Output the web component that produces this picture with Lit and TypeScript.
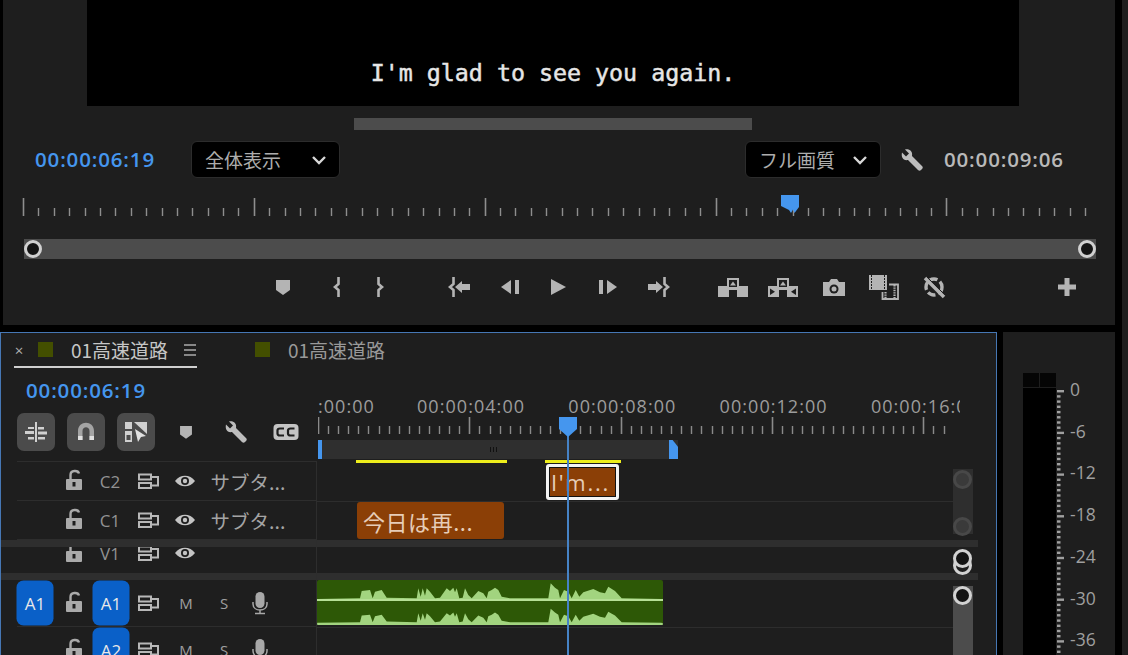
import { LitElement, html, css, svg } from "lit";
import { customElement } from "lit/decorators.js";

const G = "#b4b4b4";
const BG = "#1e1e1e";

const range = (n: number) => Array.from({ length: n }, (_, i) => i);

const wave1: [number, number][] = [[22,192],[150,190],[155,168],[180,165],[188,190],[195,170],[215,165],[230,188],[320,190],[325,160],[332,185],[338,160],[345,182],[350,160],[360,170],[375,190],[390,188],[410,160],[420,168],[430,158],[435,172],[440,160],[448,190],[458,188],[465,160],[475,180],[485,190],[505,168],[520,175],[530,190],[535,170],[545,165],[555,158],[565,165],[575,185],[600,190],[715,190],[722,145],[735,158],[745,165],[750,190],[762,165],[775,170],[785,190],[797,165],[808,185],[820,172],[850,162],[870,172],[885,175],[895,155],[915,168],[935,190],[1055,192]];

function wavePath(dy: number, shrink: number) {
  const base = 195;
  const pts = wave1.map(([x, y]) => `${(x / 3).toFixed(1)},${((base - (base - y) * shrink + dy) / 3).toFixed(1)}`);
  return `M7.3,${((base + dy) / 3).toFixed(1)} L${pts.join(" L")} L351.7,${((base + dy) / 3).toFixed(1)} Z`;
}

const braceL = (x: number) => svg`<path d="M${x + 2.5},-10V-3L${x - 1},0L${x + 2.5},3V10" fill="none" stroke="${G}" stroke-width="2.6"/>`;
const braceR = (x: number) => svg`<path d="M${x - 2.5},-10V-3L${x + 1},0L${x - 2.5},3V10" fill="none" stroke="${G}" stroke-width="2.6"/>`;
const topBox = svg`<path d="M-15,-1H-6V-9H6V-1H15V10H4V3H-4V10H-15Z" fill="${G}"/><rect x="-4" y="-7" width="8" height="7" fill="${BG}"/><path d="M-3,-1.5L0,-5.5L3,-1.5Z" fill="${G}"/>`;

const icons = {
  marker: svg`<path d="M-7,-7H7V3L0,8L-7,3Z" fill="${G}"/>`,
  inB: braceL(0),
  outB: braceR(0),
  goIn: svg`${braceL(-9)}<path d="M-5,0L2,-6V-3H10V3H2V6Z" fill="${G}"/>`,
  stepB: svg`<path d="M1,-7V7L-9,0Z" fill="${G}"/><rect x="5" y="-7" width="4" height="14" fill="${G}"/>`,
  play: svg`<path d="M-7,-8V8L8,0Z" fill="${G}"/>`,
  stepF: svg`<rect x="-9" y="-7" width="4" height="14" fill="${G}"/><path d="M-1,-7V7L9,0Z" fill="${G}"/>`,
  goOut: svg`${braceR(9)}<path d="M5,0L-2,-6V-3H-10V3H-2V6Z" fill="${G}"/>`,
  lift: topBox,
  extract: svg`${topBox}<path d="M-13,1.5V8L-8,4.7Z" fill="${BG}"/><path d="M13,1.5V8L8,4.7Z" fill="${BG}"/>`,
  camera: svg`<path d="M-11,-5H-5L-3,-8H3L5,-5H11V9H-11Z" fill="${G}"/><circle cy="2" r="4.5" fill="${BG}"/><circle cy="2" r="2.5" fill="${G}"/>`,
  compare: svg`<rect x="-14" y="-12" width="18" height="15" fill="${G}"/><path d="M-11.5,-12V3M1.5,-12V3" stroke="${BG}" stroke-width="1" stroke-dasharray="2 1"/><path d="M6,-2.5H15V12H-.5V5" fill="none" stroke="${G}" stroke-width="1.8"/><path d="M2.5,5V11M11.5,-2V11" stroke="${G}" stroke-width="2.2" stroke-dasharray="1.4 1"/>`,
  proxy: svg`<circle r="8" fill="none" stroke="${G}" stroke-width="3.4" stroke-dasharray="8 3"/><path d="M-9,-9L10,10" stroke="${G}" stroke-width="3.5"/><path d="M-7,-10L11,8" stroke="${BG}" stroke-width="1"/>`,
  plus: svg`<path d="M-2.5,-9H2.5V-2.5H9V2.5H2.5V9H-2.5V2.5H-9V-2.5H-2.5Z" fill="${G}"/>`,
  wrench: svg`<path d="M-10,-7.5L-6,-3.5L-3,-6.5L-7,-10.5C-3,-11.5 1,-9 0,-4L10,6C11,7 11,8 10,9L9,10C8,11 7,11 6,10L-4,0C-9,1 -11,-3 -10,-7.5Z" fill="#bdbdbd"/>`,
  menu: svg`<path d="M-6,-5H6M-6,0H6M-6,5H6" stroke="#aaa" stroke-width="1.3"/>`,
  nest: svg`<path d="M-1,-10H1V10H-1Z" fill="#d0d0d0"/><path d="M-11,-1H-2V2H-11ZM2,-5H8V-2.5H2ZM2,-.5H11V2.5H2ZM-8,-5H-2V-3H-8ZM-8,5H-2V7.5H-8ZM2,5H9V7.5H2Z" fill="#d0d0d0"/>`,
  magnet: svg`<path d="M-8,8V-1C-8,-12 8,-12 8,-1V8H3.5V-1C3.5,-6 -3.5,-6 -3.5,-1V8Z" fill="#a4a4a4"/><rect x="-8" y="4" width="4.5" height="4" fill="#e0e0e0"/><rect x="3.5" y="4" width="4.5" height="4" fill="#e0e0e0"/>`,
  linked: svg`<path d="M-11,-10H-4V-3H-11ZM-11,-1H-4V10H-11Z" fill="#d0d0d0"/><path d="M-9.5,3H-5.5V8H-9.5Z" fill="#4b4b4b"/><path d="M-2,-10H11V2Z" fill="#d0d0d0"/><path d="M-2,-6L11,3L4,4L1,11Z" fill="#4b4b4b"/><path d="M-1,-3L10,4L5,5L2,10Z" fill="#e0e0e0"/>`,
  cc: svg`<rect x="-12.5" y="-8" width="25" height="16" rx="4" fill="#c4c4c4"/><path d="M-2,-3.5H-6Q-8.5,-3.5 -8.5,-1.5V1.5Q-8.5,3.5 -6,3.5H-2M8.5,-3.5H4.5Q2,-3.5 2,-1.5V1.5Q2,3.5 4.5,3.5H8.5" fill="none" stroke="${BG}" stroke-width="2.2"/>`,
  lock: svg`<path d="M-3.5,-2V-6C-3.5,-11 4,-11 5,-7.5" fill="none" stroke="#aaa" stroke-width="2.4"/><rect x="-8" y="-2" width="16" height="11" rx="1" fill="#aaa"/><rect x="-1.5" y="1" width="3" height="4.5" fill="${BG}"/>`,
  sync: svg`<rect x="-9" y="-6.5" width="12" height="5" fill="none" stroke="#b8b8b8" stroke-width="2"/><rect x="-9" y="2" width="12" height="5" fill="none" stroke="#b8b8b8" stroke-width="2"/><path d="M3,-4H10V4.5H3" fill="none" stroke="#b8b8b8" stroke-width="2"/>`,
  eye: svg`<path d="M-10,0C-5,-7 5,-7 10,0C5,7 -5,7 -10,0Z" fill="#c4c4c4"/><circle r="4" fill="${BG}"/><circle r="2.2" fill="#c4c4c4"/>`,
  mic: svg`<rect x="-4.5" y="-11" width="9" height="16" rx="4.5" fill="#a8a8a8"/><path d="M-7,-1V1C-7,9 7,9 7,1V-1M0,7V10M-5,10.5H5" fill="none" stroke="#a8a8a8" stroke-width="1.5"/>`,
  chevron: svg`<path d="M-6,-3L0,3L6,-3" fill="none" stroke="#d8d8d8" stroke-width="2.4"/>`,
};

function ic(body: unknown, w = 28, h = 28) {
  return html`<svg class="ic" width="${w}" height="${h}" viewBox="${-w / 2} ${-h / 2} ${w} ${h}">${body}</svg>`;
}

@customElement("app-root")
export class AppRoot extends LitElement {
  static styles = css`
    :host {
      display: block; width: 1128px; height: 655px; overflow: hidden; background: #000; position: relative;
      font-family: "Open Sans", "Noto Sans CJK JP", sans-serif; color: #b4b4b4;
    }
    svg { display: block; }
    .jp { font-family: "Noto Sans CJK JP", sans-serif; }
    .strip { position: absolute; top: 0; right: 0; width: 6px; height: 655px; background: #1e1e1e; }
    .monitor { margin-left: 3px; width: 1112px; height: 325px; background: #1e1e1e; display: flex; flex-direction: column; }
    .video { margin-left: 84px; width: 932px; height: 106px; background: #000; display: flex; justify-content: center; flex: none; }
    .subtitle { margin-top: 58px; font: 400 23.3px/30px "DejaVu Sans Mono", monospace; color: #e6e6e6; height: 30px; -webkit-text-stroke: .45px #e6e6e6; }
    .hscroll { margin: 12px 0 0 351px; width: 398px; height: 12px; background: #4c4c4c; flex: none; }
    .ctl { margin-top: 11px; height: 37px; display: flex; align-items: center; flex: none; }
    .ctl .tc { margin-bottom: 2px; }
    .tc { font-size: 20.5px; font-weight: 600; letter-spacing: .85px; white-space: nowrap; }
    .tc.blue { color: #4596ee; }
    .tc.gray { color: #b9b9b9; }
    .tc.first { margin-left: 32px; }
    .drop {
      height: 37px; box-sizing: border-box; background: #000; border: 1px solid #2c2c2c; border-radius: 6px;
      display: flex; align-items: center; justify-content: space-between; font-size: 19px; color: #adadad;
    }
    .drop svg { flex: none; }
    .d1 { margin-left: 36px; width: 149px; padding: 0 11px 0 13px; }
    .d2 { margin-left: 405px; width: 136px; padding: 0 11px 0 13px; }
    .wr { margin-left: 19px; margin-right: 20px; }
    .ruler1 { margin: 19px 0 0 20px; height: 22px; flex: none; }
    .ruler1 svg { overflow: visible; }
    .slider { margin: 20px 0 0 21px; width: 1072px; height: 20px; background: #4c4c4c; position: relative; flex: none; }
    .knob { position: absolute; width: 18px; height: 18px; box-sizing: border-box; border: 3px solid #d0d0d0; border-radius: 50%; background: #141414; top: 1px; }
    .knob.l { left: 0; }
    .knob.r { right: 0; }
    .transport { margin-top: 14px; height: 28px; position: relative; flex: none; }
    .transport .ic { position: absolute; top: 0; }

    .lower { display: flex; margin-top: 7px; height: 323px; }
    .tl {
      width: 997px; height: 323px; box-sizing: border-box; background: #1e1e1e; border: 1px solid #4677b4; border-bottom: 0;
      position: relative; overflow: hidden; flex: none;
    }
    .meter { margin-left: 6px; width: 112px; background: #1e1e1e; position: relative; flex: none; }
    .tabs { display: flex; align-items: center; height: 33px; margin-left: 13px; width: 183px; border-bottom: 2px solid #cfcfcf; position: relative; }
    .x { font-size: 15px; width: 10px; text-align: center; margin-right: 14px; margin-left: 0; color: #b0b0b0; flex: none; }
    .sw { width: 15px; height: 15px; background: #434f00; flex: none; }
    .tab { font-size: 19px; margin-left: 18px; white-space: nowrap; color: #c6c6c6; flex: none; }
    .tabs .menu { margin-left: 14px; flex: none; }
    .tab2 { position: absolute; left: 241px; top: 0; height: 33px; display: flex; align-items: center; }
    .tab2 .tab { color: #999; }
    .tc2 { margin: 10px 0 0 25px; line-height: 24px; height: 24px; }
    .tools { margin: 11px 0 10px 16px; display: flex; align-items: center; height: 38px; }
    .tb { width: 38px; height: 38px; border-radius: 7px; background: #4b4b4b; display: flex; align-items: center; justify-content: center; margin-right: 12px; flex: none; }
    .pl { flex: none; }
    .pl.p1 { margin-left: 9px; }
    .pl.p2 { margin-left: 27px; }
    .pl.p3 { margin-left: 23px; }
    .tracks { width: 316px; }
    .row { position: relative; box-sizing: border-box; border-bottom: 1px solid #2d2d2d; margin-left: 16px; }
    .row .cell { position: absolute; top: 50%; transform: translate(-50%, -50%); white-space: nowrap; }
    .row.c { height: 39px; }
    .row.v { height: 26px; border-bottom: 0; overflow: hidden; margin-bottom: 7px; }
    .row.v .cell { top: calc(50% - 7px); }
    .row.c2 { margin-bottom: 7px; }
    .row.a { height: 47px; }
    .lbl { font-size: 17px; color: #929292; }
    .sub { font-size: 19.5px; color: #a4a4a4; }
    .ms { font-size: 15px; color: #a0a0a0; }
    .blueb { width: 37px; height: 45px; border-radius: 7px; background: #0a60c8; color: #e8e8e8; font-size: 17px; display: flex; align-items: center; justify-content: center; }
    .topl { height: 1px; background: #2d2d2d; margin-left: 16px; }

    .canvas { position: absolute; left: 0; top: 0; width: 996px; height: 323px; pointer-events: none; }
    .band { height: 7px; background: #2e2e2e; position: absolute; left: 0; width: 977px; }
    .band.b1 { top: 207px; }
    .band.b2 { top: 240px; }
    .rclip { position: absolute; left: 317px; top: 61px; width: 642px; height: 24px; overflow: hidden; }
    .rclip span { position: absolute; top: 0; font-size: 18px; color: #9c9c9c; letter-spacing: 1.05px; white-space: nowrap; line-height: 24px; }
    .rticks { position: absolute; left: 317px; top: 84px; }
    .zoombar { position: absolute; left: 317px; top: 107px; width: 360px; height: 19px; background: #2f2f2f; }
    .zl { position: absolute; left: 0; top: 0; width: 4px; height: 19px; background: #4596ee; }
    .zr { position: absolute; left: 351px; top: 0; width: 9px; height: 19px; background: #4596ee; clip-path: polygon(0 0, 40% 0, 100% 35%, 100% 100%, 0 100%); }
    .grip { position: absolute; left: 172px; top: 7px; width: 7px; height: 5px; background: repeating-linear-gradient(90deg, #111 0 1.4px, transparent 1.4px 2.8px); }
    .vline { position: absolute; left: 315px; top: 128px; width: 1px; height: 195px; background: #2d2d2d; }
    .hl { position: absolute; left: 316px; width: 637px; height: 1px; background: #2d2d2d; }
    .hl.h1 { top: 168px; }
    .hl.h2 { top: 294px; }
    .yel { position: absolute; height: 3px; background: #eeee1c; top: 127px; }
    .yel.y1 { left: 355px; width: 151px; }
    .yel.y2 { left: 544px; width: 76px; }
    .clip { position: absolute; box-sizing: border-box; background: #8b3f06; color: #e6cdb8; font-size: 22px; border-radius: 3px; white-space: nowrap; overflow: hidden; display: flex; align-items: center; }
    .clip.sel { left: 545px; top: 131px; width: 73px; height: 36px; border: 3px solid #f4f4f4; box-shadow: inset 0 0 0 1px #111; padding-left: 2px; letter-spacing: 1.7px; }
    .clip.c1 { left: 356px; top: 169px; width: 147px; height: 37px; padding-left: 6px; letter-spacing: .55px; }
    .audio { position: absolute; left: 316px; top: 247px; }
    .pline { position: absolute; left: 566px; top: 100px; width: 2px; height: 223px; background: #4683c6; }
    .phead { position: absolute; left: 558px; top: 84px; width: 18px; height: 20px; background: #4596ee; clip-path: polygon(0 0, 100% 0, 100% 60%, 50% 100%, 0 60%); }
    .vs { position: absolute; left: 952px; width: 20px; background: #2e2e2e; }
    .vs.off { top: 136px; height: 65px; }
    .vs.on { background: #4c4c4c; top: 253px; height: 70px; }
    .dk, .wk { position: absolute; left: 952px; width: 19px; height: 19px; box-sizing: border-box; border-radius: 50%; }
    .dk { border: 3px solid #484848; background: #3a3a3a; }
    .dk.a { top: 137px; }
    .dk.b { top: 184px; }
    .wk { border: 3px solid #d2d2d2; background: #141414; }
    .wk.s1 { top: 223px; background: transparent; }
    .wk.s2 { top: 216px; }
    .wk.s3 { top: 253px; }

    .black { position: absolute; left: 20px; top: 41px; width: 33px; height: 282px; background: #000; }
    .hdr { position: absolute; left: 0; top: 0; width: 33px; height: 15px; box-sizing: border-box; display: flex; gap: 1.5px; background: #1e1e1e; border-bottom: 1px solid #1e1e1e; }
    .hdr i { flex: 1; background: #050505; }
    .mscale { position: absolute; left: 54px; top: 57px; }
    .db { position: absolute; left: 67px; font-size: 17.5px; line-height: 22px; color: #9f9f9f; }
  `;

  private ticks(count: number, step: number, every: number, majH: number, minH: number, H: number, color: string) {
    return svg`${range(count).map((i) => {
      const x = Math.round(i * step) + 0.5;
      const major = i % every === 0;
      return svg`<line x1="${x}" x2="${x}" y1="${H - (major ? majH : minH)}" y2="${H}" stroke="${color}" stroke-width="${major ? 1.6 : 1.4}"/>`;
    })}`;
  }

  private transport() {
    const left = 3;
    const items: [unknown, number][] = [
      [icons.marker, 283], [icons.inB, 336], [icons.outB, 381], [icons.goIn, 460], [icons.stepB, 510], [icons.play, 558],
      [icons.stepF, 608], [icons.goOut, 658], [icons.lift, 733], [icons.extract, 783], [icons.camera, 834], [icons.compare, 883],
      [icons.proxy, 934], [icons.plus, 1067],
    ];
    return items.map(([b, x]) => html`<svg class="ic" style="left:${x - 17 - left}px" width="34" height="28" viewBox="-17 -14 34 28">${b}</svg>`);
  }

  private trackRow(cls: string, label: string, opts: { sub?: boolean; eye?: boolean; audio?: boolean; src?: boolean; blue?: boolean }) {
    const c = (x: number, body: unknown) => html`<div class="cell" style="left:${x - 17}px">${body}</div>`;
    return html`<div class="row ${cls}">
      ${opts.src ? c(35, html`<div class="blueb">A1</div>`) : ""}
      ${c(74, ic(icons.lock, 20, 24))}
      ${opts.blue ? c(111, html`<div class="blueb">${label}</div>`) : c(110, html`<span class="lbl">${label}</span>`)}
      ${c(148, ic(icons.sync, 24, 20))}
      ${opts.eye ? c(185, ic(icons.eye, 24, 18)) : ""}
      ${opts.sub ? c(248, html`<span class="sub jp">サブタ...</span>`) : ""}
      ${opts.audio ? html`${c(186, html`<span class="ms">M</span>`)}${c(224, html`<span class="ms">S</span>`)}${c(260, ic(icons.mic, 20, 26))}` : ""}
    </div>`;
  }

  private meter() {
    const dots = range(54).map((i) => {
      const y = 1 + i * 5.2125;
      const major = i % 8 === 0;
      return svg`<rect x="0" y="${y.toFixed(1)}" width="${major ? 7 : 3.5}" height="2.4" fill="#a0a0a0"/>`;
    });
    const labels = ["0", "-6", "-12", "-18", "-24", "-30", "-36"];
    return html`
      <div class="black"><div class="hdr"><i></i><i></i></div></div>
      <svg class="mscale" width="8" height="270">${dots}</svg>
      ${labels.map((l, i) => html`<div class="db" style="top:${46 + i * 41.7}px">${l}</div>`)}
    `;
  }

  render() {
    return html`
      <div class="strip"></div>
      <div class="monitor">
        <div class="video"><div class="subtitle">I'm glad to see you again.</div></div>
        <div class="hscroll"></div>
        <div class="ctl">
          <span class="tc blue first">00:00:06:19</span>
          <div class="drop d1 jp"><span>全体表示</span>${ic(icons.chevron, 18, 14)}</div>
          <div class="drop d2 jp"><span>フル画質</span>${ic(icons.chevron, 18, 14)}</div>
          <div class="wr">${ic(icons.wrench, 24, 24)}</div>
          <span class="tc gray">00:00:09:06</span>
        </div>
        <div class="ruler1">
          <svg width="1072" height="22" viewBox="0 0 1072 22">
            ${this.ticks(70, 15.39, 15, 18, 8, 19, "#8e8e8e")}
            <path d="M758,-2H776V10L771.5,16L770,12.5L768,16L766,13L758,9Z" fill="#4596ee"/>
          </svg>
        </div>
        <div class="slider"><div class="knob l"></div><div class="knob r"></div></div>
        <div class="transport">${this.transport()}</div>
      </div>
      <div class="lower">
        <div class="tl">
          <div class="tabs">
            <span class="x">×</span><span class="sw"></span><span class="tab jp">01高速道路</span>
            <span class="menu">${ic(icons.menu, 16, 14)}</span>
            <div class="tab2"><span class="sw"></span><span class="tab jp">01高速道路</span></div>
          </div>
          <div class="tracks">
            <div class="tc2 tc blue">00:00:06:19</div>
            <div class="tools">
              <div class="tb">${ic(icons.nest, 26, 26)}</div>
              <div class="tb">${ic(icons.magnet, 24, 24)}</div>
              <div class="tb">${ic(icons.linked, 26, 26)}</div>
              <div class="pl p1">${ic(svg`<g transform="scale(.85)">${icons.marker}</g>`, 20, 20)}</div>
              <div class="pl p2">${ic(icons.wrench, 26, 26)}</div>
              <div class="pl p3">${ic(icons.cc, 28, 20)}</div>
            </div>
            <div class="topl"></div>
            ${this.trackRow("c", "C2", { sub: true, eye: true })}
            ${this.trackRow("c c2", "C1", { sub: true, eye: true })}
            ${this.trackRow("v", "V1", { eye: true })}
            ${this.trackRow("a", "A1", { src: true, blue: true, audio: true })}
            ${this.trackRow("a", "A2", { blue: true, audio: true })}
          </div>
          <div class="canvas">
            <div class="rclip">
              ${[":00:00", "00:00:04:00", "00:00:08:00", "00:00:12:00", "00:00:16:00"].map((t, i) =>
                html`<span style="left:${i === 0 ? 0 : 99 + (i - 1) * 151.3}px">${t}</span>`)}
            </div>
            <svg class="rticks" width="640" height="18">${this.ticks(63, 10.09, 15, 17, 8, 17, "#8a8a8a")}</svg>
            <div class="zoombar"><div class="zl"></div><div class="zr"></div><div class="grip"></div></div>
            <div class="band b1"></div>
            <div class="band b2"></div>
            <div class="vline"></div>
            <div class="hl h1"></div>
            <div class="hl h2"></div>
            <div class="yel y1"></div>
            <div class="yel y2"></div>
            <div class="clip sel">I'm...</div>
            <div class="clip c1 jp">今日は再...</div>
            <svg class="audio" width="346" height="46" viewBox="7 0 346 46">
              <rect x="7" y="0" width="346" height="45" rx="2" fill="#2d5806"/>
              <g transform="translate(0,-45)" fill="#a2d47f">
                <path d="${wavePath(0, 1)}"/>
                <path d="${wavePath(71, 0.9)}"/>
              </g>
              <rect x="7" y="19" width="346" height="2" fill="#b6e096"/>
              <rect x="7" y="43" width="346" height="2" rx="1" fill="#a2d47f"/>
            </svg>
            <div class="pline"></div>
            <div class="phead"></div>
            <div class="vs off"></div>
            <div class="dk a"></div>
            <div class="dk b"></div>
            <div class="wk s1"></div>
            <div class="wk s2"></div>
            <div class="vs on"></div>
            <div class="wk s3"></div>
          </div>
        </div>
        <div class="meter">${this.meter()}</div>
      </div>
    `;
  }
}
